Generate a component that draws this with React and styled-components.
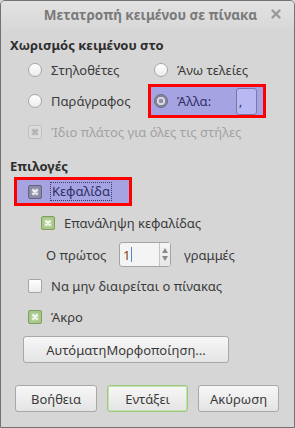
import React from "react";
import styled, { createGlobalStyle } from "styled-components";

const GlobalStyle = createGlobalStyle`
  html, body {
    margin: 0;
    padding: 0;
    background: #d6d6d6;
  }
  body {
    font-family: "Noto Sans", "DejaVu Sans", sans-serif;
    font-size: 13px;
    color: #3a3a3a;
  }
`;

const Window = styled.div`
  width: 295px;
  height: 428px;
  box-sizing: border-box;
  border: 1px solid #727272;
  border-radius: 5px 5px 0 0;
  background: #d6d6d6;
  display: flex;
  flex-direction: column;
  overflow: hidden;
`;

const TitleBar = styled.div`
  height: 27px;
  display: flex;
  align-items: center;
  justify-content: center;
  position: relative;
  background: linear-gradient(#e2e2e2, #d8d8d8);
  font-weight: bold;
  font-size: 13.5px;
  color: #7a7a7a;
  padding-left: 6px;
  padding-bottom: 1px;
`;

const Close = styled.span`
  position: absolute;
  right: 11px;
  top: 6px;
  width: 14px;
  height: 14px;
`;

const Body = styled.div`
  padding: 0 9px;
  display: flex;
  flex-direction: column;
`;

const Heading = styled.div`
  height: ${(p) => p.h || 24}px;
  margin-top: ${(p) => p.mt || 0}px;
  display: flex;
  align-items: center;
  font-weight: bold;
  color: #2e2e2e;
`;

const Row = styled.div`
  height: ${(p) => p.h || 24}px;
  margin-top: ${(p) => p.mt || 0}px;
  padding-left: ${(p) => p.indent || 0}px;
  display: flex;
  align-items: center;
  gap: ${(p) => p.gap ?? 9}px;
  color: ${(p) => (p.disabled ? "#a2a2a2" : "#3a3a3a")};
`;

const RadioGrid = styled.div`
  display: grid;
  grid-template-columns: 123px 112px;
  grid-template-rows: 24px 28px;
  row-gap: 5px;
  padding-left: 18px;
  margin-top: -2px;
`;

const Cell = styled.div`
  display: flex;
  align-items: center;
  gap: 9px;
  padding-left: ${(p) => p.pl || 0}px;
  ${(p) =>
    p.marked &&
    `
    background: #a5a3e2;
    outline: 3px solid #ff0000;
    color: #2f2f62;
  `}
`;

const Marked = styled.div`
  width: 112px;
  height: 23px;
  margin-left: 7px;
  margin-top: ${(p) => p.mt || 0}px;
  padding-left: 11px;
  box-sizing: border-box;
  display: flex;
  align-items: center;
  gap: 8px;
  background: #a5a3e2;
  outline: 3px solid #ff0000;
  color: #2f2f62;
`;

const Focus = styled.span`
  border: 1px dotted #3a3a70;
  padding: 0 1px;
  line-height: 17px;
`;

const RadioDot = styled.span`
  width: 14px;
  height: 14px;
  box-sizing: border-box;
  border-radius: 50%;
  border: 1px solid ${(p) => (p.on ? "#6e6e7e" : "#a6a6a6")};
  background: ${(p) =>
    p.on
      ? "radial-gradient(circle, #8f8fa2 0 2px, #d8d8e6 2.5px 4px, #85859a 4.5px)"
      : "linear-gradient(#ffffff, #ececec)"};
  flex-shrink: 0;
`;

const Box = styled.span`
  width: 14px;
  height: 14px;
  box-sizing: border-box;
  border-radius: 2px;
  flex-shrink: 0;
  display: flex;
  align-items: center;
  justify-content: center;
  border: 1px solid
    ${(p) =>
      p.variant === "green"
        ? "#7e9f5e"
        : p.variant === "focus"
        ? "#64647e"
        : p.variant === "disabled"
        ? "#c0c0c0"
        : "#a6a6a6"};
  background: ${(p) =>
    p.variant === "green"
      ? "#a9c98a"
      : p.variant === "focus"
      ? "#8a8aa8"
      : p.variant === "disabled"
      ? "#dcdcdc"
      : "linear-gradient(#ffffff, #ececec)"};
`;

const Cross = ({ color }) => (
  <svg width="8" height="8" viewBox="0 0 8 8">
    <rect x="0.5" y="0.5" width="7" height="7" rx="1" fill={color} opacity="0.35" />
    <path d="M2 2 L6 6 M6 2 L2 6" stroke={color} strokeWidth="1.6" strokeLinecap="round" />
  </svg>
);

const Check = ({ variant }) => (
  <Box variant={variant}>
    {variant === "green" && <Cross color="#ffffff" />}
    {variant === "focus" && <Cross color="#ffffff" />}
    {variant === "disabled" && <Cross color="#a8a8a8" />}
  </Box>
);

const SmallField = styled.span`
  width: 21px;
  height: 27px;
  margin-left: auto;
  margin-right: 6px;
  box-sizing: border-box;
  border: 1px solid #7a78a8;
  border-radius: 3px;
  background: #b9b8f2;
  display: flex;
  align-items: center;
  padding-left: 2px;
  font-size: 12px;
`;

const Label = styled.span`
  width: ${(p) => p.w}px;
  flex-shrink: 0;
`;

const Spin = styled.div`
  width: 52px;
  height: 25px;
  box-sizing: border-box;
  border: 1px solid #a4a4a4;
  border-radius: 3px;
  background: #f4f4f4;
  display: flex;
  margin-right: 13px;
`;

const SpinText = styled.div`
  flex: 1;
  display: flex;
  align-items: center;
  padding-left: 3px;
  color: #8a3c14;
  border-right: 1px solid #c4c4c4;
`;

const Caret = styled.span`
  width: 1px;
  height: 15px;
  background: #4a8ad8;
  margin-left: 1px;
`;

const SpinArrows = styled.div`
  width: 10px;
  display: flex;
  flex-direction: column;
  align-items: center;
  justify-content: center;
  gap: 3px;
  background: linear-gradient(#f6f6f6, #e6e6e6);
`;

const Button = styled.button`
  height: 27px;
  width: ${(p) => p.w}px;
  box-sizing: border-box;
  border: 1px solid ${(p) => (p.primary ? "#9bc97a" : "#a8a8a8")};
  box-shadow: ${(p) => (p.primary ? "0 0 0 1px #c6e2b0 inset" : "none")};
  border-radius: 3px;
  background: linear-gradient(#f7f7f7, #e4e4e4);
  font-family: inherit;
  font-size: 13px;
  color: #3a3a3a;
  padding: 0;
`;

const ButtonRow = styled.div`
  display: flex;
  gap: 10px;
  margin-top: 22px;
  padding-left: 5px;
`;

const AutoRow = styled.div`
  margin-top: 7px;
  padding-left: 13px;
`;

export default function App() {
  return (
    <>
      <GlobalStyle />
      <Window>
        <TitleBar>
          Μετατροπή κειμένου σε πίνακα
          <Close>
            <svg width="14" height="14" viewBox="0 0 14 14">
              <path d="M3.5 3.5 L10.5 10.5 M10.5 3.5 L3.5 10.5" stroke="#9a9a9a" strokeWidth="2.4" strokeLinecap="round" />
            </svg>
          </Close>
        </TitleBar>
        <Body>
          <Heading h={30} mt={1}>Χωρισμός κειμένου στο</Heading>
          <RadioGrid>
            <Cell>
              <RadioDot />
              Στηλοθέτες
            </Cell>
            <Cell pl={3}>
              <RadioDot />
              Άνω τελείες
            </Cell>
            <Cell>
              <RadioDot />
              Παράγραφος
            </Cell>
            <Cell marked pl={3}>
              <RadioDot on />
              Άλλα:
              <SmallField>,</SmallField>
            </Cell>
          </RadioGrid>
          <Row mt={5} indent={18} disabled>
            <Check variant="disabled" />
            Ίδιο πλάτος για όλες τις στήλες
          </Row>
          <Heading mt={10}>Επιλογές</Heading>
          <Marked mt={2}>
            <Check variant="focus" />
            <Focus>Κεφαλίδα</Focus>
          </Marked>
          <Row mt={8} indent={31}>
            <Check variant="green" />
            Επανάληψη κεφαλίδας
          </Row>
          <Row h={25} mt={7} indent={36} gap={0}>
            <Label w={73}>Ο πρώτος</Label>
            <Spin>
              <SpinText>
                1<Caret />
              </SpinText>
              <SpinArrows>
                <svg width="6" height="5" viewBox="0 0 6 5">
                  <path d="M0 5 L3 0 L6 5 Z" fill="#8a8a8a" />
                </svg>
                <svg width="6" height="5" viewBox="0 0 6 5">
                  <path d="M0 0 L3 5 L6 0 Z" fill="#8a8a8a" />
                </svg>
              </SpinArrows>
            </Spin>
            γραμμές
          </Row>
          <Row mt={7} indent={18}>
            <Check />
            Να μην διαιρείται ο πίνακας
          </Row>
          <Row mt={7} indent={18}>
            <Check variant="green" />
            Άκρο
          </Row>
          <AutoRow>
            <Button w={206}>ΑυτόματηΜορφοποίηση...</Button>
          </AutoRow>
          <ButtonRow>
            <Button w={82}>Βοήθεια</Button>
            <Button w={81} primary>
              Εντάξει
            </Button>
            <Button w={81}>Ακύρωση</Button>
          </ButtonRow>
        </Body>
      </Window>
    </>
  );
}
